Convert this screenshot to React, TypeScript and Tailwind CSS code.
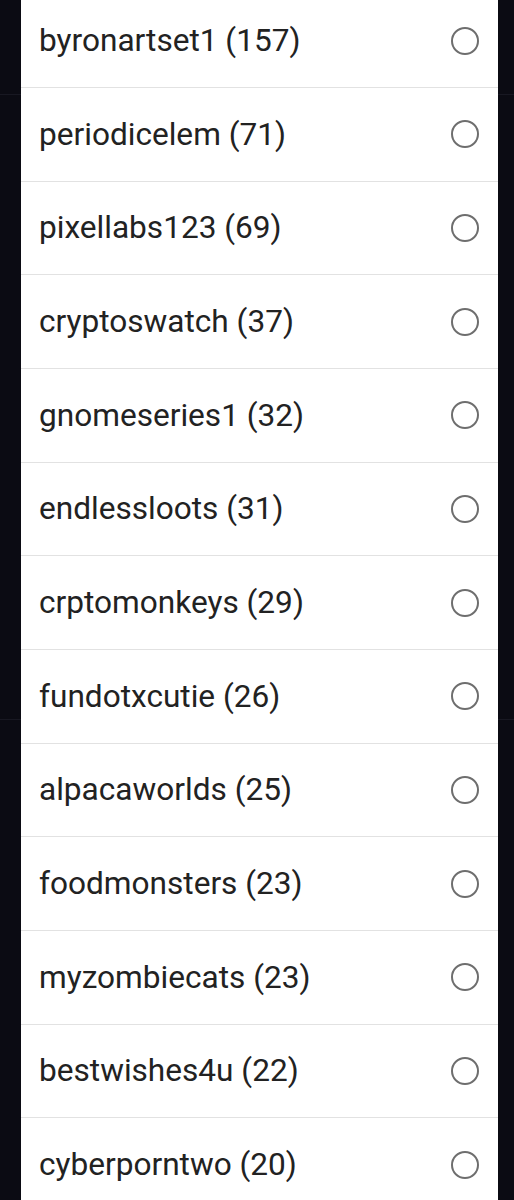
const items = [
  "byronartset1 (157)",
  "periodicelem (71)",
  "pixellabs123 (69)",
  "cryptoswatch (37)",
  "gnomeseries1 (32)",
  "endlessloots (31)",
  "crptomonkeys (29)",
  "fundotxcutie (26)",
  "alpacaworlds (25)",
  "foodmonsters (23)",
  "myzombiecats (23)",
  "bestwishes4u (22)",
  "cyberporntwo (20)",
];

export default function App() {
  return (
    <div className="relative h-[1200px] overflow-hidden bg-[#0b0b13] font-['Roboto',sans-serif]">
      {/* faint seams in the dark backdrop */}
      <div className="absolute left-0 right-0 top-[94px] h-px bg-[#181822]" />
      <div className="absolute left-0 right-0 top-[719px] h-px bg-[#181822]" />
      <div className="relative ml-[21px] mr-[16px] mt-[-5.6px] bg-white">
        {items.map((label, i) => (
          <div
            key={label}
            className={
              i < items.length - 1
                ? "flex h-[93.66px] items-center justify-between border-b border-[#e2e2e2] pl-[18px] pr-[19px]"
                : "flex h-[93.66px] items-center justify-between pl-[18px] pr-[19px]"
            }
          >
            <span className="text-[31.6px] leading-none text-[#222222]">{label}</span>
            <span className="h-[28px] w-[28px] rounded-full border-[2.5px] border-[#6e6e6e]" />
          </div>
        ))}
      </div>
    </div>
  );
}
